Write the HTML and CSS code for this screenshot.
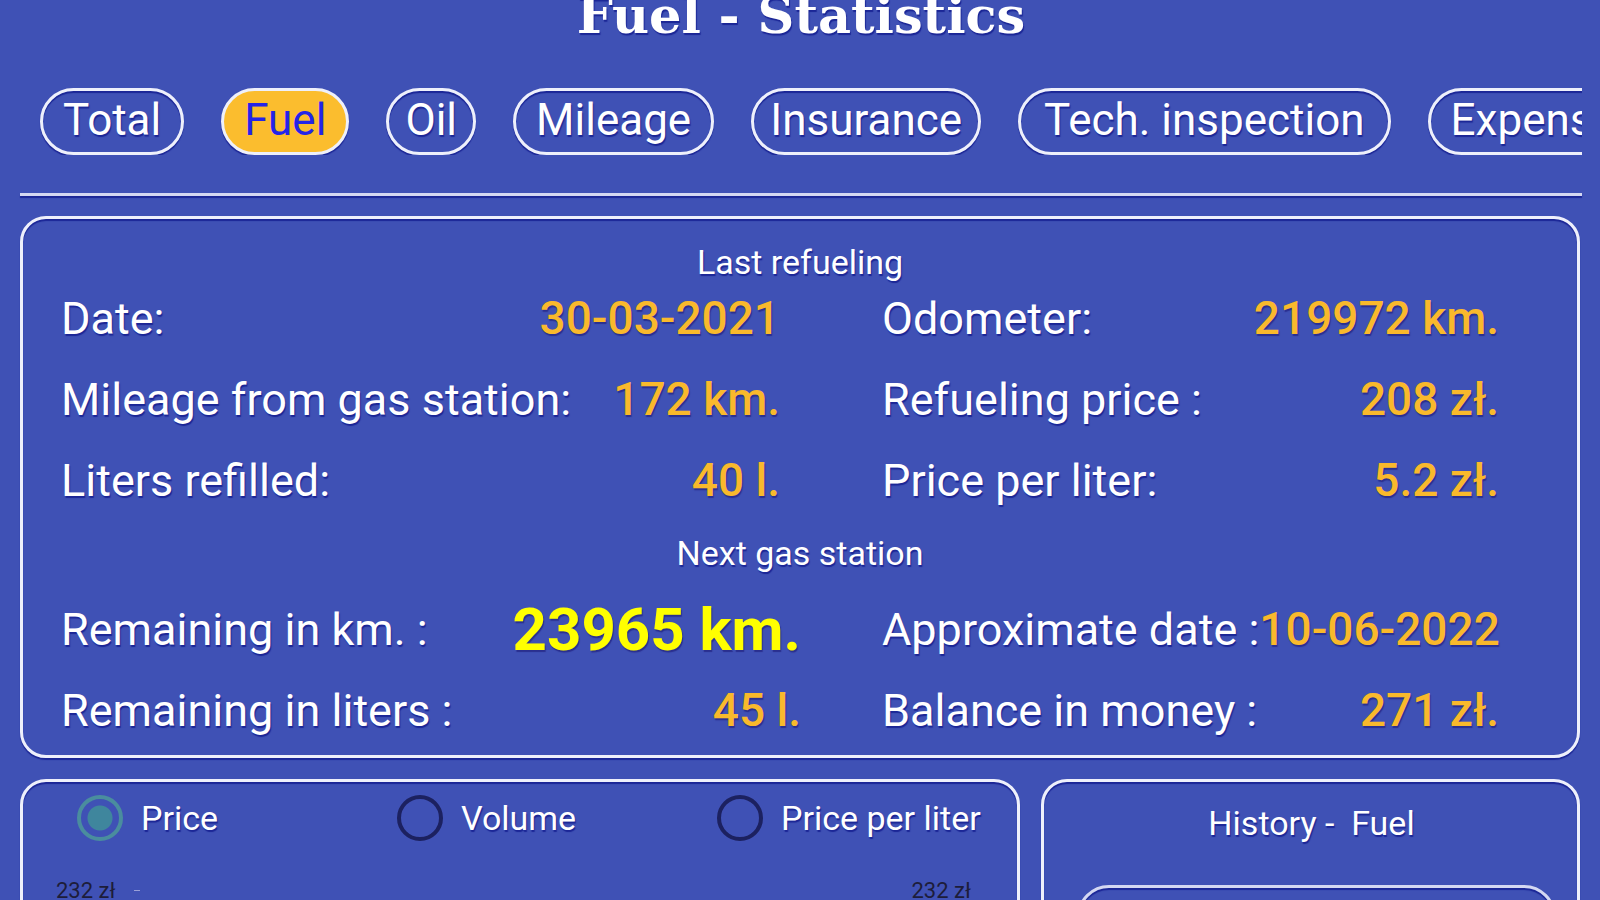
FILE: index.html
```html
<!DOCTYPE html>
<html>
<head lang="en">
    <meta charset="UTF-8">
    <title>Fuel - Statistics</title>
    <link rel="stylesheet" href="styles.css">
</head>
<body>
<div class="page">
    <h1 class="title">Fuel - Statistics</h1>

    <div class="tabs">
        <span class="tab">Total</span>
        <span class="tab active">Fuel</span>
        <span class="tab tab-narrow">Oil</span>
        <span class="tab">Mileage</span>
        <span class="tab tab-narrow">Insurance</span>
        <span class="tab tab-wide">Tech. inspection</span>
        <span class="tab">Expenses</span>
    </div>

    <div class="divider"></div>

    <div class="card summary">
        <div class="caption">Last refueling</div>
        <div class="grid grid-last">
            <div class="pair"><span class="label">Date:</span><span class="value">30-03-2021</span></div>
            <div class="pair"><span class="label">Odometer:</span><span class="value">219972 km.</span></div>
            <div class="pair"><span class="label">Mileage from gas station:</span><span class="value">172 km.</span></div>
            <div class="pair"><span class="label">Refueling price :</span><span class="value">208 zł.</span></div>
            <div class="pair"><span class="label">Liters refilled:</span><span class="value">40 l.</span></div>
            <div class="pair"><span class="label">Price per liter:</span><span class="value">5.2 zł.</span></div>
        </div>

        <div class="caption caption-next">Next gas station</div>
        <div class="grid grid-next">
            <div class="pair"><span class="label">Remaining in km. :</span><span class="value big">23965 km.</span></div>
            <div class="pair"><span class="label">Approximate date :</span><span class="value">10-06-2022</span></div>
            <div class="pair"><span class="label">Remaining in liters :</span><span class="value">45 l.</span></div>
            <div class="pair"><span class="label">Balance in money :</span><span class="value">271 zł.</span></div>
        </div>
    </div>

    <div class="bottom">
        <div class="card chart">
            <div class="radios">
                <label class="radio checked"><span class="dot"></span>Price</label>
                <label class="radio"><span class="dot"></span>Volume</label>
                <label class="radio"><span class="dot"></span>Price per liter</label>
            </div>
            <div class="axis">
                <span class="axis-label">232 zł</span><span class="tick"></span>
                <span class="axis-label axis-right">232 zł</span>
            </div>
        </div>
        <div class="card history">
            <div class="history-title">History -&nbsp; Fuel</div>
            <div class="history-list"></div>
        </div>
    </div>
</div>
</body>
</html>
```

FILE: styles.css
```css
*{
    margin: 0;
    padding: 0;
    box-sizing: border-box;
}
html,body{
    width: 100%;
    height: 100%;
    overflow: hidden;
}
body{
    background-color: #3f51b5;
    font-family: Roboto, "Liberation Sans", sans-serif;
    color: #fff;
}
.page{
    padding: 0 18px 0 20px;
}
.title{
    margin-top: -10px;
    height: 50px;
    font-family: "DejaVu Serif", "Liberation Serif", serif;
    font-size: 51px;
    line-height: 50px;
    font-weight: bold;
    text-align: center;
    text-shadow: 1px 2px 1px #1b2696;
}

/* tabs */
.tabs{
    margin-top: 48px;
    padding-left: 20px;
    display: flex;
    gap: 37px;
    overflow: hidden;
    white-space: nowrap;
}
.tab{
    flex: none;
    height: 67px;
    padding: 0 20px;
    border: 3px solid #eef0fb;
    border-radius: 34px;
    font-size: 44px;
    line-height: 59px;
    box-shadow: 0 2px 1px #1b2696, inset 0 2px 1px #1b2696;
    text-shadow: 1px 2px 1px #1b2696;
}
.tab-narrow{
    padding: 0 16px;
}
.tab-wide{
    padding: 0 23px;
}
.tab.active{
    background-color: #fbbd2e;
    color: #2424e8;
    text-shadow: none;
    box-shadow: 0 2px 1px #1b2696;
}
.divider{
    margin-top: 38px;
    height: 3px;
    background-color: #d4d8f2;
    box-shadow: 0 2px 1px #1b2696;
}

/* cards */
.card{
    border: 3px solid #eef0fb;
    border-radius: 26px;
    box-shadow: 0 2px 1px #1b2696, inset 0 2px 1px #1b2696;
}
.summary{
    margin: 20px 2px 0 0;
    height: 542px;
    padding: 25px 0 0 38px;
}
.caption{
    font-size: 34px;
    line-height: 36px;
    text-align: center;
    padding-right: 38px;
    text-shadow: 1px 2px 1px #1b2696;
}
.caption-next{
    margin-top: 17px;
}
.grid{
    display: grid;
    grid-auto-rows: 76px;
    row-gap: 5px;
}
.grid-last{
    grid-template-columns: 719px 617px;
    column-gap: 102px;
}
.grid-next{
    margin-top: 20px;
    grid-template-columns: 740px 617px;
    column-gap: 81px;
}
.pair{
    display: flex;
    justify-content: space-between;
    align-items: center;
    white-space: nowrap;
}
.label{
    font-size: 45px;
    text-shadow: 1px 2px 1px #1b2696;
}
.value{
    font-size: 46px;
    font-weight: 500;
    color: #f9b92c;
    text-shadow: 1px 2px 1px #2a2f8f;
}
.value.big{
    font-size: 60px;
    font-weight: bold;
    color: #ffff00;
}

/* bottom row */
.bottom{
    margin-top: 21px;
    display: flex;
    gap: 21px;
    margin-right: 2px;
}
.chart{
    width: 1000px;
    height: 300px;
    padding: 13px 0 0 54px;
}
.radios{
    display: grid;
    grid-template-columns: repeat(3, 320px);
}
.radio{
    display: flex;
    align-items: center;
    gap: 18px;
    height: 46px;
    font-size: 34px;
    text-shadow: 1px 2px 1px #1b2696;
}
.dot{
    width: 46px;
    height: 46px;
    border-radius: 50%;
    border: 4px solid #1c2160;
    flex: none;
}
.radio.checked .dot{
    border-color: #4a8d9e;
    background: radial-gradient(circle, #3f869d 0 12px, transparent 13px);
}
.axis{
    margin: 37px 0 0 -21px;
    display: flex;
    align-items: center;
    height: 24px;
    font-size: 22px;
    color: #1d1d3a;
}
.tick{
    margin-left: 19px;
    width: 6px;
    height: 1px;
    background-color: #9aa0d8;
}
.axis-right{
    margin-left: 771px;
}
.history{
    flex: 1;
    height: 300px;
    padding-top: 21px;
}
.history-title{
    font-size: 34px;
    line-height: 40px;
    text-align: center;
    padding-left: 2px;
    text-shadow: 1px 2px 1px #1b2696;
}
.history-list{
    margin: 42px 21px 0 33px;
    height: 200px;
    border: 3px solid #d4d8f2;
    border-radius: 32px;
    box-shadow: inset 0 2px 1px #1b2696;
}
```
